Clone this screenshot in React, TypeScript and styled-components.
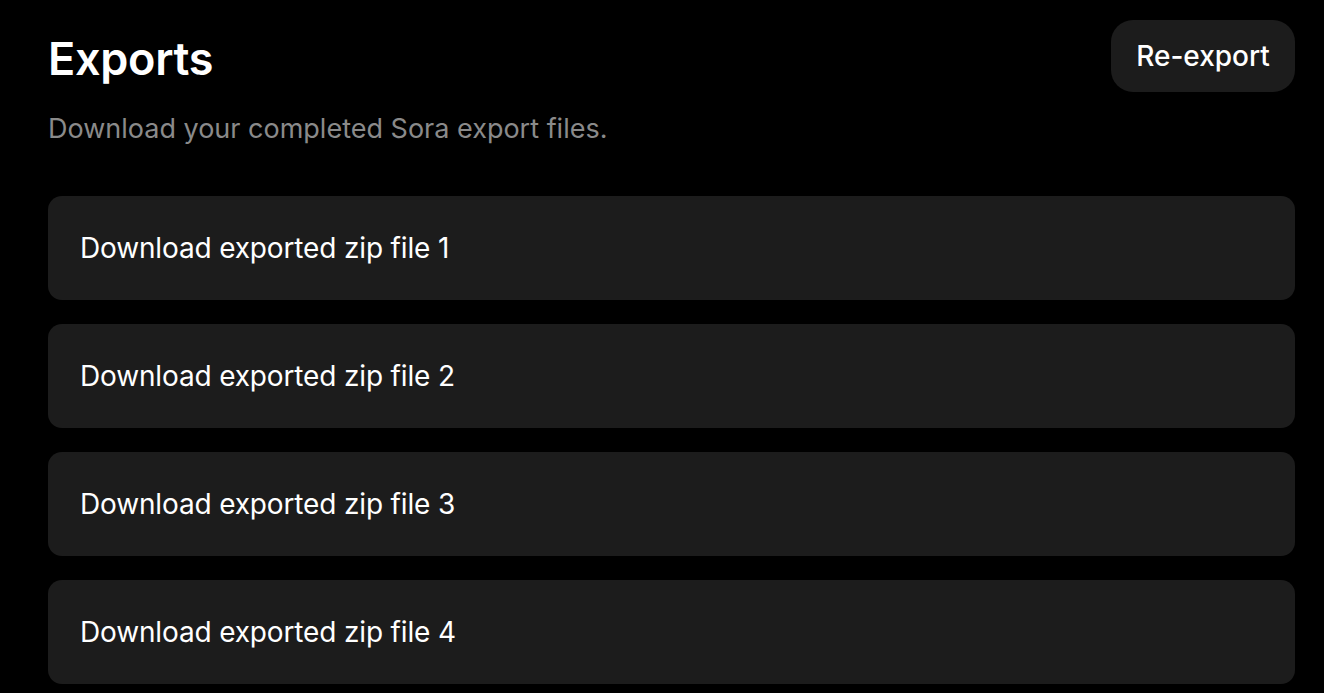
import React from "react";
import styled, { createGlobalStyle } from "styled-components";

const Global = createGlobalStyle`
  html, body { margin: 0; padding: 0; background: #000; }
  body { font-family: Inter, "Noto Sans", sans-serif; color: #fff; -webkit-font-smoothing: antialiased; }
`;

const Page = styled.div`
  padding: 20px 29px 0 48px;
  display: flex;
  flex-direction: column;
`;

const Header = styled.div`
  display: flex;
  justify-content: space-between;
  align-items: flex-start;
`;

const TitleBlock = styled.div`
  display: flex;
  flex-direction: column;
`;

const Title = styled.h1`
  margin: 14px 0 0;
  font-size: 45px;
  font-weight: 600;
  line-height: 50px;
  letter-spacing: -0.3px;
`;

const Subtitle = styled.p`
  margin: 28px 0 0;
  font-size: 27px;
  line-height: 34px;
  color: #8a8a8a;
`;

const Button = styled.button`
  height: 72px;
  width: 184px;
  border: none;
  border-radius: 22px;
  background: #1c1c1c;
  color: #fff;
  font-family: inherit;
  font-size: 28px;
  font-weight: 500;
  cursor: pointer;
`;

const List = styled.div`
  margin-top: 50px;
  display: flex;
  flex-direction: column;
  gap: 24px;
`;

const Row = styled.div`
  height: 104px;
  border-radius: 14px;
  background: #1c1c1c;
  display: flex;
  align-items: center;
  padding-left: 32px;
  font-size: 28px;
  font-weight: 400;
  letter-spacing: -0.15px;
`;

export default function App() {
  return (
    <>
      <Global />
      <Page>
        <Header>
          <TitleBlock>
            <Title>Exports</Title>
            <Subtitle>Download your completed Sora export files.</Subtitle>
          </TitleBlock>
          <Button>Re-export</Button>
        </Header>
        <List>
          {[1, 2, 3, 4].map((n) => (
            <Row key={n}>Download exported zip file {n}</Row>
          ))}
        </List>
      </Page>
    </>
  );
}
